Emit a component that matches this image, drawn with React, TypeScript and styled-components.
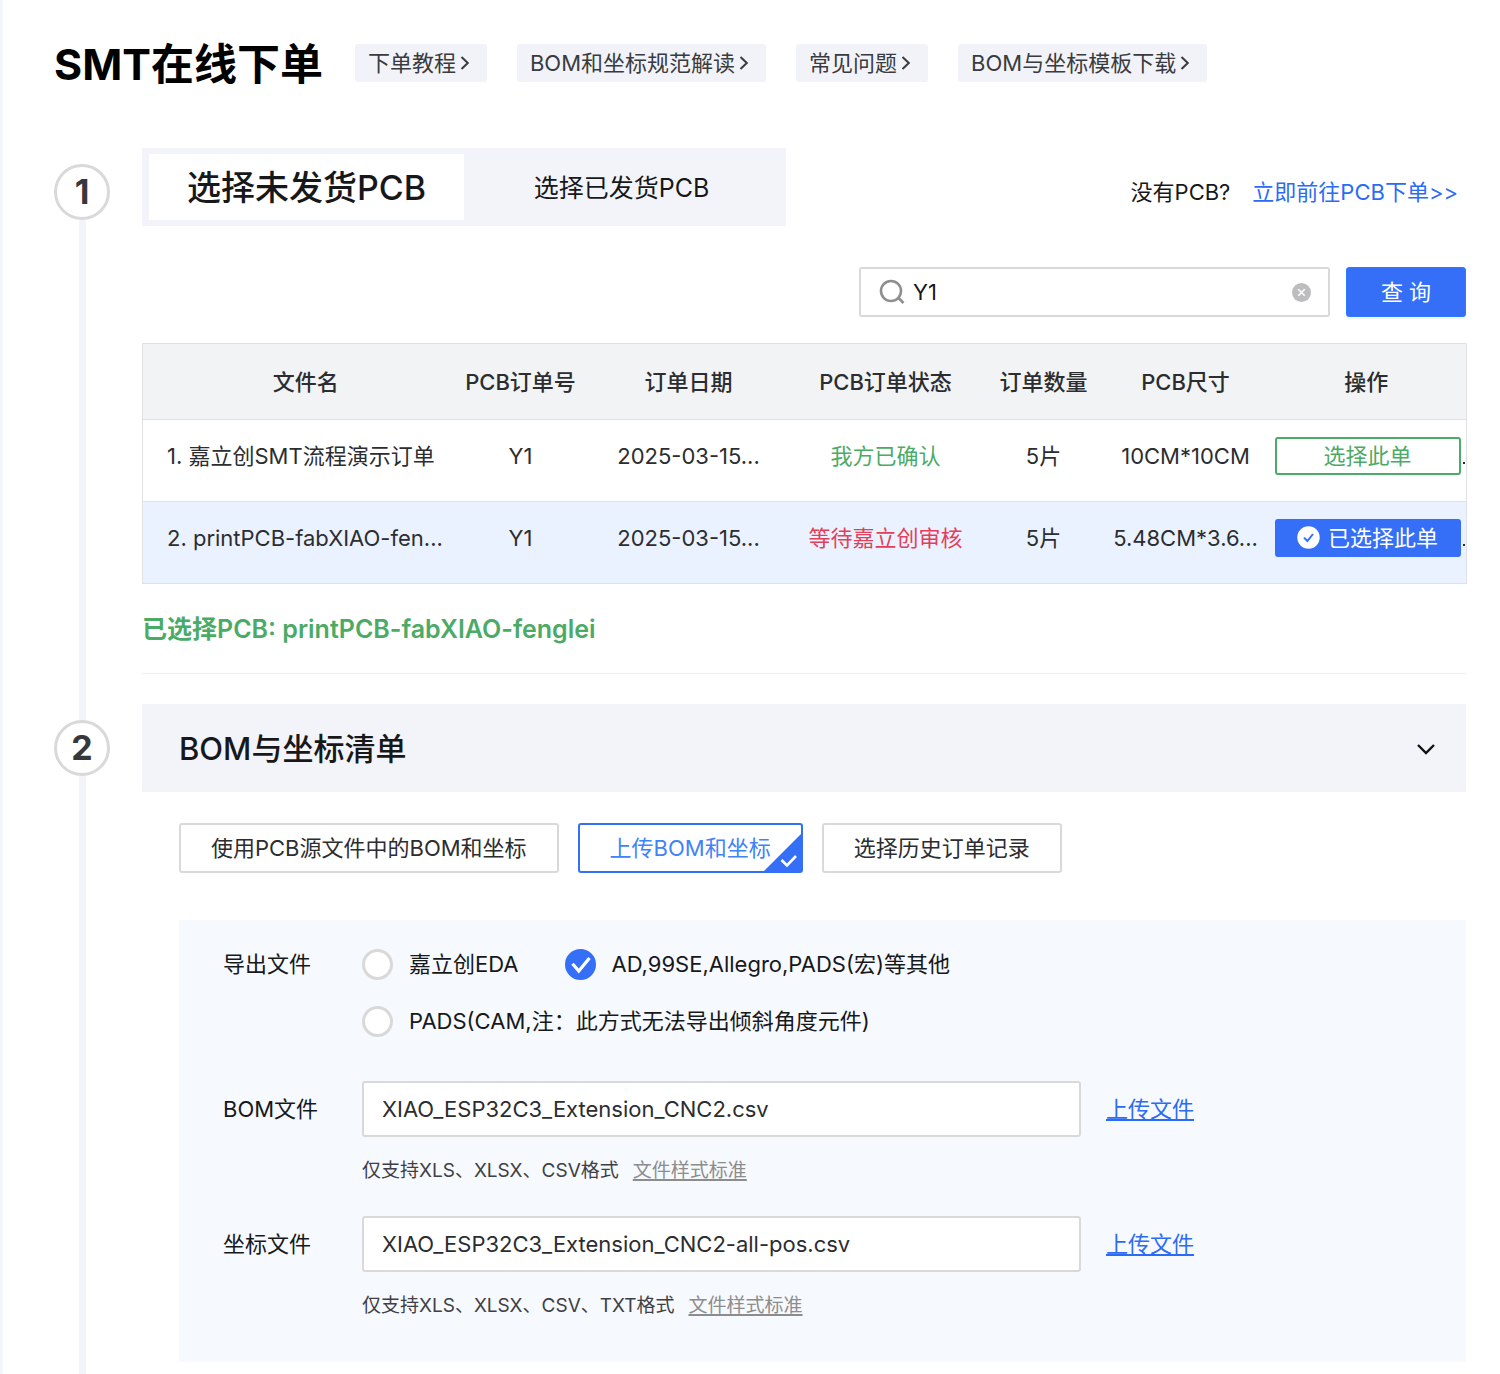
import React, { useState } from "react";
import styled, { createGlobalStyle, css } from "styled-components";

const color = {
  blue: "#356ff7",
  link: "#2b6bf5",
  green: "#4bab66",
  red: "#e2405a",
  ink: "#17181a",
  text: "#2c2d30",
  muted: "#8c8c8c",
  line: "#d9d9d9",
  tableLine: "#e0e1e3",
  fill: "#f3f4f9",
  panel: "#f6f9fe",
};

const GlobalStyle = createGlobalStyle`
  *, *::before, *::after { box-sizing: border-box; }
  body {
    margin: 0;
    background: #fff;
    color: ${color.ink};
    font: 400 22px/32px Inter, "Noto Sans CJK SC", sans-serif;
  }
  button, input { font: inherit; color: inherit; margin: 0; }
  button { cursor: pointer; }
`;

const Page = styled.main`
  border-left: 3px solid #f5f6fb;
  padding: 32px 34px 0 51px;
`;

const Header = styled.header`
  display: flex;
  align-items: center;
  gap: 32px;
  height: 62px;
  margin-bottom: 54px;
`;

const Title = styled.h1`
  margin: 0;
  padding-top: 2px;
  font-size: 43px;
  line-height: 64px;
  font-weight: 700;
  color: #000;
  white-space: nowrap;
`;

const Tags = styled.nav`
  display: flex;
  gap: 30px;
`;

const Tag = styled.a`
  display: flex;
  align-items: center;
  gap: 4px;
  height: 38px;
  padding: 0 17px 0 13px;
  border-radius: 3px;
  background: #f2f3f8;
  color: #3a3b3f;
  text-decoration: none;
  white-space: nowrap;
`;

const Step = styled.section`
  display: grid;
  grid-template-columns: 56px minmax(0, 1fr);
  column-gap: 32px;
`;

const Rail = styled.div`
  display: flex;
  flex-direction: column;
  align-items: center;
`;

const RailLead = styled.div<{ $visible: boolean }>`
  width: 7px;
  height: 16px;
  background: ${(p) => (p.$visible ? color.fill : "transparent")};
`;

const RailLine = styled.div`
  flex: 1;
  width: 7px;
  background: ${color.fill};
`;

const StepNumber = styled.div`
  display: grid;
  place-items: center;
  width: 56px;
  height: 56px;
  border: 3px solid #d9d9d9;
  border-radius: 50%;
  color: #37383d;
  font-size: 34px;
  font-weight: 700;
`;

const StepBody = styled.div<{ $bottom: number }>`
  padding-bottom: ${(p) => p.$bottom}px;
`;

const TabBar = styled.div`
  display: flex;
  justify-content: space-between;
  align-items: center;
  margin-bottom: 41px;
`;

const Tabs = styled.div`
  display: grid;
  grid-template-columns: 1fr 1fr;
  width: 644px;
  padding: 6px 7px;
  background: ${color.fill};
`;

const Tab = styled.button<{ $active: boolean }>`
  height: 66px;
  padding: 2px 0 0;
  border: 0;
  background: ${(p) => (p.$active ? "#fff" : "transparent")};
  font-size: ${(p) => (p.$active ? 34 : 25)}px;
  font-weight: ${(p) => (p.$active ? 500 : 400)};
`;

const NoPcb = styled.p`
  display: flex;
  gap: 22px;
  margin: 9px 8px 0 0;
`;

const Link = styled.a`
  color: ${color.link};
  text-decoration: none;
`;

const SearchForm = styled.form`
  display: flex;
  justify-content: flex-end;
  gap: 16px;
  margin-bottom: 26px;
`;

const SearchBox = styled.label`
  display: flex;
  align-items: center;
  gap: 7px;
  width: 471px;
  height: 50px;
  padding: 0 17px;
  border: 2px solid ${color.line};
  border-radius: 3px;
`;

const SearchInput = styled.input`
  flex: 1;
  min-width: 0;
  padding: 0;
  border: 0;
  outline: 0;
  background: none;
`;

const IconButton = styled.button`
  display: flex;
  padding: 0;
  border: 0;
  background: none;
`;

const SearchButton = styled.button`
  width: 120px;
  height: 50px;
  padding: 0;
  border: 1px solid #2f7bff;
  border-radius: 3px;
  background: ${color.blue};
  box-shadow: 0 2px 0 rgba(0, 0, 0, 0.04);
  color: #fff;
`;

const OrderTable = styled.table`
  width: 100%;
  table-layout: fixed;
  border-collapse: collapse;
  border: 1px solid ${color.tableLine};
  color: ${color.text};
  text-align: center;
  white-space: nowrap;
`;

const HeadCell = styled.th<{ $first?: boolean }>`
  height: 76px;
  padding: 0 0 0 ${(p) => (p.$first ? 16 : 0)}px;
  background: #f2f3f5;
  font-weight: 500;
`;

const OrderRow = styled.tr<{ $selected: boolean }>`
  height: 82px;
  border-top: 1px solid ${color.tableLine};
  background: ${(p) => (p.$selected ? "#ebf2ff" : "#fff")};
`;

const Cell = styled.td<{ $tone?: string; $name?: boolean }>`
  padding: 0 0 10px ${(p) => (p.$name ? 24 : 0)}px;
  text-align: ${(p) => (p.$name ? "left" : "center")};
  color: ${(p) => p.$tone || "inherit"};
`;

const ActionBox = styled.div`
  display: flex;
  align-items: center;
  gap: 2px;
  padding-left: 8px;
  &::after {
    content: "";
    width: 2px;
    height: 2px;
    margin-top: 14px;
    background: ${color.text};
  }
`;

const PickButton = styled.button<{ $selected: boolean }>`
  display: flex;
  flex: none;
  align-items: center;
  justify-content: center;
  gap: 8px;
  width: 186px;
  height: 38px;
  padding: 0;
  border: 2px solid ${color.green};
  border-radius: 3px;
  background: #fff;
  color: ${color.green};
  ${(p) =>
    p.$selected &&
    css`
      border-color: ${color.blue};
      background: ${color.blue};
      color: #fff;
    `}
`;

const SelectedNote = styled.p`
  margin: 0;
  padding: 27px 0 26px;
  border-bottom: 1px solid #efeff1;
  color: ${color.green};
  font-size: 25px;
  line-height: 36px;
  font-weight: 600;
`;

const SectionHead = styled.h2`
  margin: 0;
`;

const SectionToggle = styled.button`
  display: flex;
  align-items: center;
  justify-content: space-between;
  width: 100%;
  height: 88px;
  padding: 2px 30px 0 37px;
  border: 0;
  background: ${color.fill};
  font-size: 31px;
  font-weight: 500;
`;

const SectionContent = styled.div`
  padding: 31px 0 0 37px;
`;

const Choices = styled.div`
  display: flex;
  gap: 19px;
  margin-bottom: 47px;
`;

const Choice = styled.button<{ $active: boolean }>`
  position: relative;
  height: 50px;
  padding: 0 30px;
  border: 2px solid ${(p) => (p.$active ? color.blue : color.line)};
  border-radius: 3px;
  background: #fff;
  color: ${(p) => (p.$active ? "#3f83f8" : color.text)};
  white-space: nowrap;
`;

const CornerMark = styled.svg`
  position: absolute;
  right: -1px;
  bottom: -1px;
`;

const Panel = styled.div`
  display: grid;
  grid-template-columns: 139px minmax(0, 1fr);
  padding: 28px 44px 41px;
  background: ${color.panel};
`;

const FieldLabel = styled.label<{ $height: number }>`
  line-height: ${(p) => p.$height}px;
`;

const RadioGroup = styled.div`
  display: flex;
  flex-wrap: wrap;
  gap: 25px 46px;
  max-width: 719px;
  margin-bottom: 44px;
`;

const RadioLabel = styled.label`
  display: flex;
  align-items: center;
  gap: 16px;
  height: 32px;
  white-space: nowrap;
`;

const RadioBox = styled.span`
  display: grid;
  place-items: center;
  width: 31px;
  height: 31px;
  > * {
    grid-area: 1 / 1;
  }
  svg {
    pointer-events: none;
  }
`;

const Radio = styled.input`
  appearance: none;
  width: 31px;
  height: 31px;
  border: 3px solid #d9d9d9;
  border-radius: 50%;
  background: #fff;
  &:checked {
    border-color: ${color.blue};
    background: ${color.blue};
  }
`;

const FileField = styled.div`
  & + label {
    margin-top: 30px;
  }
  & + label + & {
    margin-top: 30px;
  }
`;

const FileRow = styled.div`
  display: flex;
  align-items: center;
  gap: 25px;
`;

const FileInput = styled.input`
  width: 719px;
  height: 56px;
  padding: 0 18px;
  border: 2px solid ${color.line};
  border-radius: 3px;
  background: #fff;
  color: ${color.text};
`;

const UploadLink = styled(Link)`
  text-decoration: underline;
  text-underline-offset: 2px;
  text-decoration-thickness: 2px;
`;

const Hint = styled.p`
  display: flex;
  gap: 14px;
  margin: 19px 0 0;
  color: #3f4045;
  font-size: 19px;
  line-height: 30px;
`;

const HintLink = styled.a`
  color: ${color.muted};
  text-decoration: underline;
  text-underline-offset: 2px;
  text-decoration-thickness: 2px;
`;

const links = ["下单教程", "BOM和坐标规范解读", "常见问题", "BOM与坐标模板下载"];

const columns = [
  { name: "文件名", width: 310 },
  { name: "PCB订单号", width: 136 },
  { name: "订单日期", width: 200 },
  { name: "PCB订单状态", width: 194 },
  { name: "订单数量", width: 122 },
  { name: "PCB尺寸", width: 162 },
  { name: "操作", width: 200 },
];

const orders = [
  { name: "1. 嘉立创SMT流程演示订单", no: "Y1", date: "2025-03-15...", status: "我方已确认", tone: color.green, count: "5片", size: "10CM*10CM" },
  { name: "2. printPCB-fabXIAO-fen...", no: "Y1", date: "2025-03-15...", status: "等待嘉立创审核", tone: color.red, count: "5片", size: "5.48CM*3.6..." },
];

const sources = ["使用PCB源文件中的BOM和坐标", "上传BOM和坐标", "选择历史订单记录"];

const exporters = ["嘉立创EDA", "AD,99SE,Allegro,PADS(宏)等其他", "PADS(CAM,注：此方式无法导出倾斜角度元件)"];

const files = [
  { id: "bom-file", label: "BOM文件", value: "XIAO_ESP32C3_Extension_CNC2.csv", hint: "仅支持XLS、XLSX、CSV格式" },
  { id: "pos-file", label: "坐标文件", value: "XIAO_ESP32C3_Extension_CNC2-all-pos.csv", hint: "仅支持XLS、XLSX、CSV、TXT格式" },
];

const ChevronRight = () => (
  <svg width="10" height="16" viewBox="0 0 10 16" fill="none" stroke="currentColor" strokeWidth="2" aria-hidden="true">
    <path d="M1.5 2 7.8 8l-6.3 6" />
  </svg>
);

const ChevronDown = () => (
  <svg width="20" height="14" viewBox="0 0 20 14" fill="none" stroke="#111" strokeWidth="2.4" aria-hidden="true">
    <path d="m2 3 8 8 8-8" />
  </svg>
);

const SearchIcon = () => (
  <svg width="28" height="28" viewBox="0 0 28 28" fill="none" stroke="#8f8f8f" strokeWidth="2.6" aria-hidden="true">
    <circle cx="13" cy="13" r="10" />
    <path d="m20 19.500 5.500 5.500" />
  </svg>
);

const ClearIcon = () => (
  <svg width="19" height="19" viewBox="0 0 19 19" aria-hidden="true">
    <circle cx="9.5" cy="9.5" r="9.5" fill="#bdbdbf" />
    <path d="m6.3 6.3 6.4 6.4m0-6.4-6.4 6.4" stroke="#fff" strokeWidth="1.6" />
  </svg>
);

const SelectedIcon = () => (
  <svg width="23" height="23" viewBox="0 0 23 23" aria-hidden="true">
    <circle cx="11.5" cy="11.5" r="11.2" fill="#fff" />
    <path d="m7 11.6 3.4 3.4 5.6-7" fill="none" stroke={color.blue} strokeWidth="2" />
  </svg>
);

const CheckIcon = () => (
  <svg width="31" height="31" viewBox="0 0 31 31" fill="none" stroke="#fff" strokeWidth="3.2" aria-hidden="true">
    <path d="m7.5 14.8 6.3 7.2L24.5 9" />
  </svg>
);

export default function App() {
  const [tab, setTab] = useState(0);
  const [query, setQuery] = useState("Y1");
  const [picked, setPicked] = useState(1);
  const [source, setSource] = useState(1);
  const [exporter, setExporter] = useState(1);

  return (
    <>
      <GlobalStyle />
      <Page>
        <Header>
          <Title>SMT在线下单</Title>
          <Tags>
            {links.map((name) => (
              <Tag key={name} href="#">
                {name}
                <ChevronRight />
              </Tag>
            ))}
          </Tags>
        </Header>

        <Step>
          <Rail>
            <RailLead $visible={false} />
            <StepNumber>1</StepNumber>
            <RailLine />
          </Rail>
          <StepBody $bottom={30}>
            <TabBar>
              <Tabs>
                {["选择未发货PCB", "选择已发货PCB"].map((name, i) => (
                  <Tab key={name} type="button" $active={tab === i} onClick={() => setTab(i)}>
                    {name}
                  </Tab>
                ))}
              </Tabs>
              <NoPcb>
                没有PCB?
                <Link href="#">立即前往PCB下单&gt;&gt;</Link>
              </NoPcb>
            </TabBar>

            <SearchForm onSubmit={(e) => e.preventDefault()}>
              <SearchBox>
                <SearchIcon />
                <SearchInput type="text" aria-label="搜索" value={query} onChange={(e) => setQuery(e.target.value)} />
                <IconButton type="button" aria-label="清空" onClick={() => setQuery("")}>
                  <ClearIcon />
                </IconButton>
              </SearchBox>
              <SearchButton type="submit">查 询</SearchButton>
            </SearchForm>

            <OrderTable>
              <colgroup>
                {columns.map((c) => (
                  <col key={c.name} width={c.width} />
                ))}
              </colgroup>
              <thead>
                <tr>
                  {columns.map((c, i) => (
                    <HeadCell key={c.name} scope="col" $first={i === 0}>
                      {c.name}
                    </HeadCell>
                  ))}
                </tr>
              </thead>
              <tbody>
                {orders.map((o, i) => (
                  <OrderRow key={o.name} $selected={picked === i}>
                    <Cell $name>{o.name}</Cell>
                    <Cell>{o.no}</Cell>
                    <Cell>{o.date}</Cell>
                    <Cell $tone={o.tone}>{o.status}</Cell>
                    <Cell>{o.count}</Cell>
                    <Cell>{o.size}</Cell>
                    <Cell>
                      <ActionBox>
                        <PickButton type="button" $selected={picked === i} onClick={() => setPicked(i)}>
                          {picked === i && <SelectedIcon />}
                          {picked === i ? "已选择此单" : "选择此单"}
                        </PickButton>
                      </ActionBox>
                    </Cell>
                  </OrderRow>
                ))}
              </tbody>
            </OrderTable>
            <SelectedNote>已选择PCB: printPCB-fabXIAO-fenglei</SelectedNote>
          </StepBody>
        </Step>

        <Step>
          <Rail>
            <RailLead $visible />
            <StepNumber>2</StepNumber>
            <RailLine />
          </Rail>
          <StepBody $bottom={12}>
            <SectionHead>
              <SectionToggle type="button" aria-expanded="true">
                BOM与坐标清单
                <ChevronDown />
              </SectionToggle>
            </SectionHead>
            <SectionContent>
              <Choices>
                {sources.map((name, i) => (
                  <Choice key={name} type="button" $active={source === i} onClick={() => setSource(i)}>
                    {name}
                    {source === i && (
                      <CornerMark width="39" height="39" viewBox="0 0 39 39" aria-hidden="true">
                        <path d="M39 0v37a2 2 0 0 1-2 2H0z" fill={color.blue} />
                        <path d="m18.5 27 5.5 5.500 9-9.500" fill="none" stroke="#fff" strokeWidth="2.6" />
                      </CornerMark>
                    )}
                  </Choice>
                ))}
              </Choices>
              <Panel>
                <FieldLabel as="span" id="exporter-label" $height={32}>
                  导出文件
                </FieldLabel>
                <RadioGroup role="radiogroup" aria-labelledby="exporter-label">
                  {exporters.map((name, i) => (
                    <RadioLabel key={name}>
                      <RadioBox>
                        <Radio type="radio" name="exporter" checked={exporter === i} onChange={() => setExporter(i)} />
                        {exporter === i && <CheckIcon />}
                      </RadioBox>
                      {name}
                    </RadioLabel>
                  ))}
                </RadioGroup>
                {files.map((f) => (
                  <React.Fragment key={f.id}>
                    <FieldLabel htmlFor={f.id} $height={56}>
                      {f.label}
                    </FieldLabel>
                    <FileField>
                      <FileRow>
                        <FileInput id={f.id} type="text" readOnly value={f.value} />
                        <UploadLink href="#">上传文件</UploadLink>
                      </FileRow>
                      <Hint>
                        {f.hint}
                        <HintLink href="#">文件样式标准</HintLink>
                      </Hint>
                    </FileField>
                  </React.Fragment>
                ))}
              </Panel>
            </SectionContent>
          </StepBody>
        </Step>
      </Page>
    </>
  );
}
